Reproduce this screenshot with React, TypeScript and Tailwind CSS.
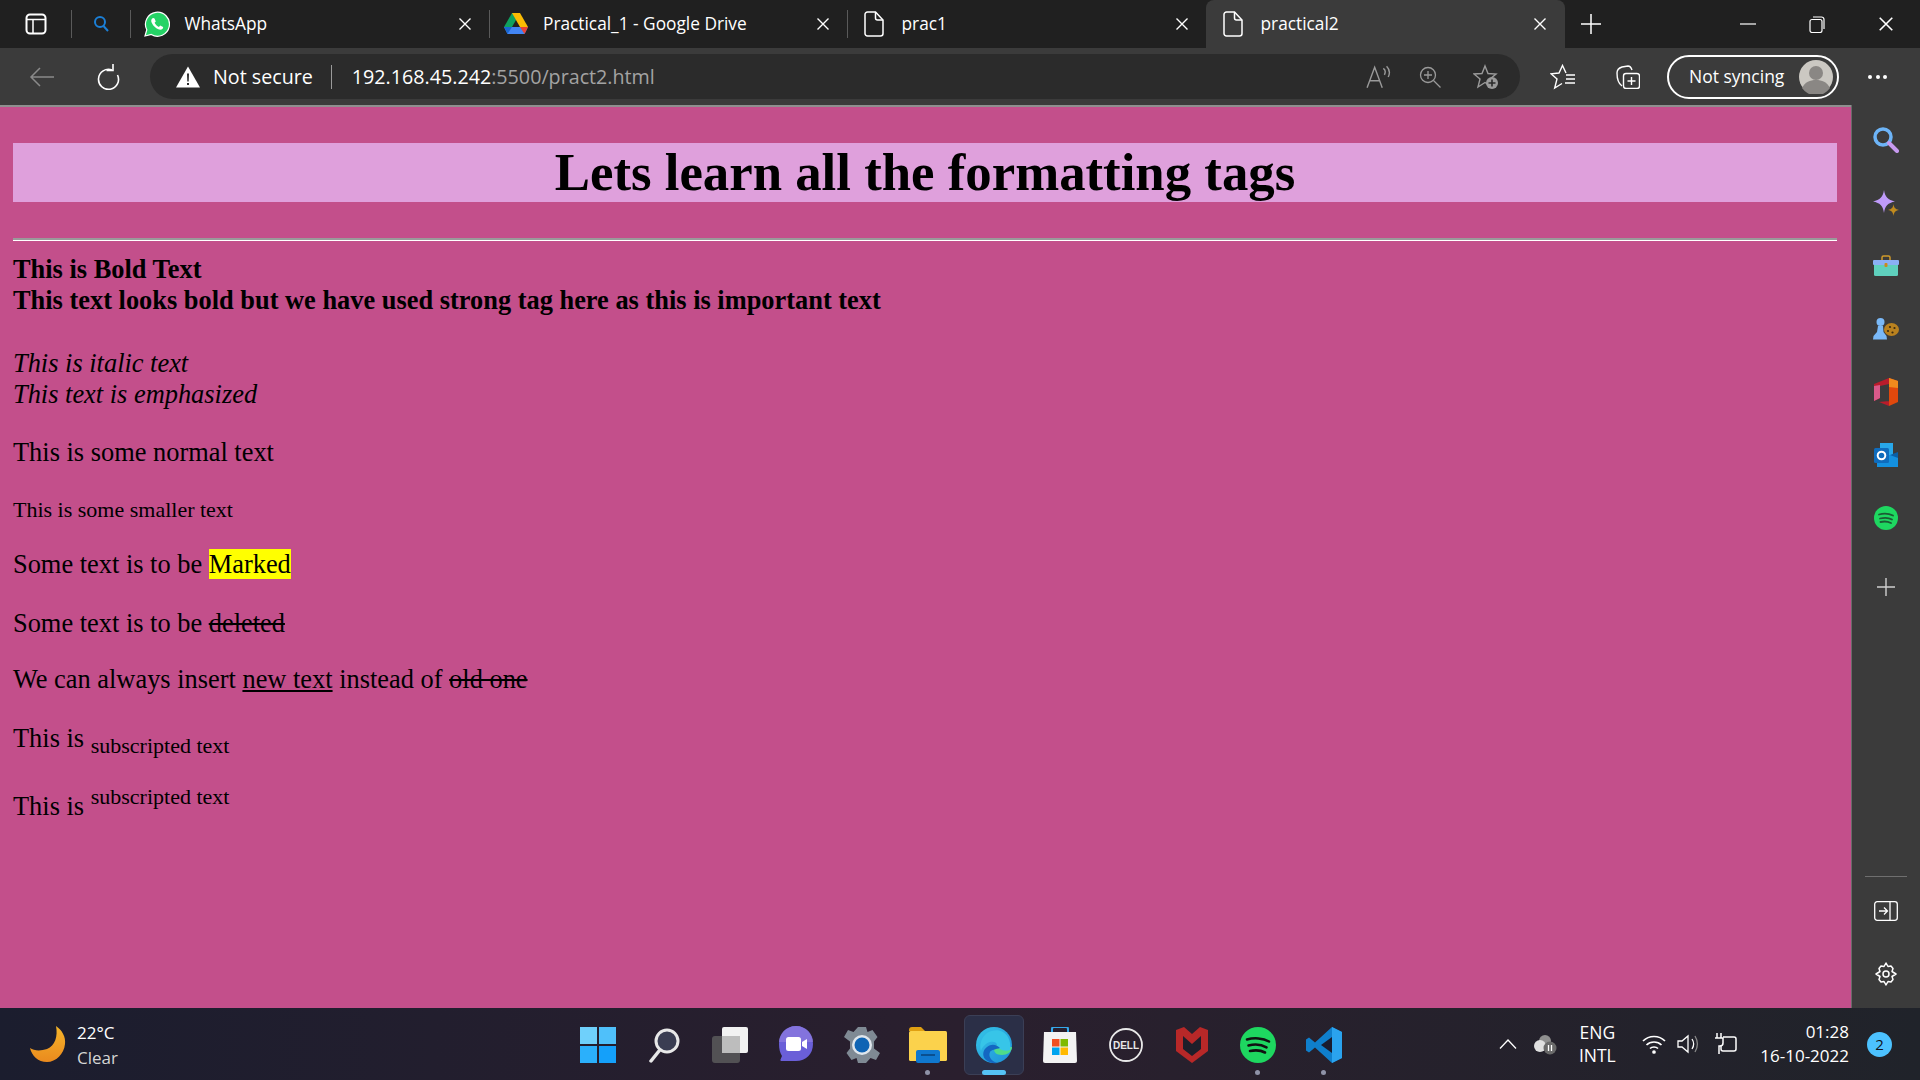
import React from "react";

const ui = { fontFamily: '"Open Sans", "Noto Sans", sans-serif' };
const serif = { fontFamily: '"Liberation Serif", "Times New Roman", serif' };

const CloseX = ({ size = 14 }: { size?: number }) => (
  <svg width={size} height={size} viewBox="0 0 14 14" fill="none" stroke="#fff" strokeWidth="1.4">
    <path d="M1.5 1.5l11 11M12.5 1.5l-11 11" />
  </svg>
);

const DocIcon = () => (
  <svg width="20" height="26" viewBox="0 0 20 26" fill="none" stroke="#fff" strokeWidth="1.5">
    <path d="M3.5 1h8L19 9v13.5a2.5 2.5 0 0 1-2.5 2.5h-13A2.5 2.5 0 0 1 1 22.500V3.500A2.500 2.500 0 0 1 3.500 1z" />
    <path d="M11.500 1v6a2 2 0 0 0 2 2H19" />
  </svg>
);

const WhatsAppIcon = () => (
  <svg width="26" height="26" viewBox="0 0 26 26">
    <path d="M1 25l1.800-6.300A12 12 0 1 1 7.300 23.500z" fill="#25d366" stroke="#fff" strokeWidth="1.200" />
    <path d="M9.300 7c-.5 0-1 .2-1.400.7C7 8.800 7 10.400 8 12.300c1.300 2.600 3.600 4.900 6.300 6 1.700.7 3.400.5 4.300-.6.400-.5.600-1.200.5-1.800l-2.900-1.500-1.300 1.500c-1.800-.7-3.500-2.300-4.300-4.200l1.200-1.300-1.300-2.900z" fill="#fff" />
  </svg>
);

const DriveIcon = () => (
  <svg width="24" height="22" viewBox="0 0 24 22">
    <path d="M8 0h8L8 14H0z" fill="#0fa15f" />
    <path d="M8 0h8l8 14h-8z" fill="#fbbc04" />
    <path d="M4 14h20l-3.500 7H3.500L0 14z" fill="#4285f4" />
    <path d="M0 14h8l-4.500 7z" fill="#1967d2" />
    <path d="M16 14h8l-3.500 7z" fill="#ea4335" />
  </svg>
);

const tabs = [
  { title: "WhatsApp", icon: <WhatsAppIcon /> },
  { title: "Practical_1 - Google Drive", icon: <DriveIcon /> },
  { title: "prac1", icon: <DocIcon /> },
];

const TabBar = () => (
  <div className="flex h-[48px] items-stretch bg-[#202020] text-[17.3px] text-white">
    <div className="flex w-[71px] items-center justify-center">
      <svg width="22" height="22" viewBox="0 0 22 22" fill="none" stroke="#fff" strokeWidth="2">
        <rect x="1.500" y="1.500" width="19" height="19" rx="3.500" />
        <path d="M1.500 6.500h19M8 6.500v14" strokeWidth="1.500" />
      </svg>
    </div>
    <div className="my-[10px] w-px bg-[#5a5a5a]" />
    <div className="flex w-[58px] items-center justify-center">
      <svg width="16" height="18" viewBox="0 0 16 18" fill="none" stroke="#1b7fd6" strokeWidth="2">
        <circle cx="7" cy="7" r="5" />
        <path d="M10.500 11l4.500 5" />
      </svg>
    </div>
    <div className="my-[10px] w-px bg-[#5a5a5a]" />
    {tabs.map((tab, i) => (
      <React.Fragment key={tab.title}>
        <div className="flex w-[357.500px] items-center pr-[17px]">
          <div className="flex w-[53.500px] justify-center pr-[1px]">{tab.icon}</div>
          <span>{tab.title}</span>
          <div className="ml-auto">
            <CloseX />
          </div>
        </div>
        {i < 2 && <div className="my-[10px] w-px bg-[#5a5a5a]" />}
      </React.Fragment>
    ))}
    <div className="flex w-[359px] items-center rounded-t-[8px] bg-[#3b3b3b] pr-[18px]">
      <div className="flex w-[55px] justify-center">
        <DocIcon />
      </div>
      <span>practical2</span>
      <div className="ml-auto">
        <CloseX />
      </div>
    </div>
    <div className="flex w-[52px] items-center justify-center">
      <svg width="22" height="22" viewBox="0 0 22 22" stroke="#fff" strokeWidth="1.500">
        <path d="M11 1v20M1 11h20" />
      </svg>
    </div>
    <div className="ml-auto flex items-center">
      <div className="flex w-[69px] justify-center">
        <svg width="16" height="2" viewBox="0 0 16 2" stroke="#fff" strokeWidth="1.200">
          <path d="M0 1h16" />
        </svg>
      </div>
      <div className="flex w-[69px] justify-center">
        <svg width="16" height="17" viewBox="0 0 16 17" fill="none" stroke="#fff" strokeWidth="1.200">
          <rect x="1" y="3.500" width="12" height="13" rx="2" />
          <path d="M4 1h8.500A2.500 2.500 0 0 1 15 3.500V13" />
        </svg>
      </div>
      <div className="flex w-[69px] justify-center">
        <CloseX size={16} />
      </div>
    </div>
  </div>
);

const ToolBar = () => (
  <div className="flex h-[57px] items-center bg-[#3b3b3b] text-white">
    <div className="flex w-[84px] justify-center">
      <svg width="26" height="22" viewBox="0 0 26 22" fill="none" stroke="#8a8a8a" strokeWidth="1.500">
        <path d="M25 11H2M11 2l-9 9 9 9" />
      </svg>
    </div>
    <div className="flex w-[48px] justify-center">
      <svg width="24" height="26" viewBox="0 0 24 26" fill="none" stroke="#fff" strokeWidth="1.600">
        <path d="M21.500 11A10 10 0 1 1 16 6" />
        <path d="M17 0v6.500h-6.500" />
      </svg>
    </div>
    <div className="ml-[18px] flex h-[45px] w-[1370px] items-center rounded-full bg-[#2b2b2b] pl-[26px]">
      <svg width="24" height="22" viewBox="0 0 24 22">
        <path d="M12 0.500L24 21.500H0z" fill="#fff" />
        <path d="M11 7.500h2l-.3 8h-1.400zM11 17h2v2h-2z" fill="#2b2b2b" />
      </svg>
      <span className="ml-[13px] text-[19.700px]" style={ui}>
        Not secure
      </span>
      <div className="ml-[18px] h-[24px] w-px bg-[#9a9a9a]" />
      <span className="ml-[20px] text-[19.700px]" style={ui}>
        192.168.45.242<span className="text-[#a3a3a3]">:5500/pract2.html</span>
      </span>
      <div className="ml-auto flex items-center pr-[21px]">
        <svg width="26" height="26" viewBox="0 0 24 24" fill="none" stroke="#9a9a9a" strokeWidth="1.300">
          <path d="M1 22L8 3l7 19M3.500 15.500h9M16 4c2 1.500 2 4 1 6M19 2c3 3 3 7 1.500 10" />
        </svg>
        <svg className="ml-[27px]" width="22" height="22" viewBox="0 0 22 22" fill="none" stroke="#9a9a9a" strokeWidth="1.300">
          <circle cx="9" cy="9" r="7.500" />
          <path d="M14.500 14.500l7 7M5 9h8M9 5v8" />
        </svg>
        <svg className="ml-[32px]" width="26" height="26" viewBox="0 0 26 26" fill="none" stroke="#9a9a9a" strokeWidth="1.400">
          <path d="M12 2l3 7.500 8 .5-6 5 2 8-7-4.500-7 4.500 2-8-6-5 8-.5z" />
          <circle cx="19" cy="19" r="6" fill="#9a9a9a" stroke="none" />
          <path d="M19 15.500v7M15.500 19h7" stroke="#2b2b2b" strokeWidth="1.600" />
        </svg>
      </div>
    </div>
    <div className="ml-[30px] flex w-[26px] justify-center">
      <svg width="26" height="26" viewBox="0 0 26 26" fill="none" stroke="#fff" strokeWidth="1.400">
        <path d="M16 9l-3.500-7.500L9 9l-8 .8 6 5.200-2.300 9L12 19.500" />
        <path d="M16 11h9M16 15h9M15 19h10" />
      </svg>
    </div>
    <div className="ml-[39px] flex w-[26px] justify-center">
      <svg width="24" height="24" viewBox="0 0 24 24" fill="none" stroke="#fff" strokeWidth="1.400">
        <path d="M6 21C3 19 1 14 1 8c0-3 2-5 5-6l6-1c2 0 3 1 4 4" />
        <rect x="7.500" y="8.500" width="16" height="15" rx="2.500" />
        <path d="M15.500 12v8M11.500 16h8" />
      </svg>
    </div>
    <div className="ml-[26px] flex h-[44px] w-[172px] items-center rounded-full border-2 border-white pl-[20px]">
      <span className="text-[17.500px]" style={ui}>
        Not syncing
      </span>
      <svg className="ml-auto mr-[4px]" width="34" height="34" viewBox="0 0 34 34">
        <circle cx="17" cy="17" r="17" fill="#cbc8c2" />
        <circle cx="17" cy="13" r="7" fill="#8a8784" />
        <path d="M3 28c3-6 8-8 14-8s11 2 14 8a17 17 0 0 1-28 0z" fill="#8a8784" />
      </svg>
    </div>
    <div className="ml-[29px] flex gap-[3.500px]">
      <div className="h-[4px] w-[4px] rounded-full bg-white" />
      <div className="h-[4px] w-[4px] rounded-full bg-white" />
      <div className="h-[4px] w-[4px] rounded-full bg-white" />
    </div>
  </div>
);

const Page = () => (
  <div
    className="min-w-0 flex-1 border-t-2 border-[#8f8f8f] bg-[#c34f8b] pl-[13px] pr-[14px] pt-[36px] text-[26.400px] leading-[31px] text-black"
    style={serif}
  >
    <h1 className="h-[59px] bg-[#dfa0dc] text-center text-[52.800px] font-bold leading-[59px]">
      Lets learn all the formatting tags
    </h1>
    <div className="mt-[36px] h-[3px] border-t-2 border-b border-t-[#9a9a9a] border-b-white" />
    <div className="mt-[13px]">
      <b className="block">This is Bold Text</b>
      <strong className="block">
        This text looks bold but we have used strong tag here as this is important text
      </strong>
    </div>
    <div className="mt-[32px]">
      <i className="block">This is italic text</i>
      <em className="block">This text is emphasized</em>
    </div>
    <p className="mt-[27px]">This is some normal text</p>
    <p className="mt-[26px] text-[22px]">
      <small className="text-[22px]">This is some smaller text</small>
    </p>
    <p className="mt-[24px]">
      Some text is to be <mark className="bg-[#ffff00]">Marked</mark>
    </p>
    <p className="mt-[28px]">
      Some text is to be <del>deleted</del>
    </p>
    <p className="mt-[25px]">
      We can always insert <ins className="underline">new text</ins> instead of <del>old one</del>
    </p>
    <p className="mt-[28px]">
      This is <sub className="text-[22px]">subscripted text</sub>
    </p>
    <p className="mt-[37px]">
      This is <sup className="text-[22px]">subscripted text</sup>
    </p>
  </div>
);

const SideBar = () => (
  <div className="flex w-[69px] shrink-0 flex-col items-center border-l border-[#6a6a6a] bg-[#3b3b3b] pt-[3px]">
    <div className="flex h-[63px] items-center">
      <svg width="26" height="26" viewBox="0 0 26 26" fill="none">
        <circle cx="10" cy="10" r="8" stroke="#6db4f7" strokeWidth="3.500" />
        <path d="M16 16l8 8" stroke="#c79af0" strokeWidth="4" strokeLinecap="round" />
      </svg>
    </div>
    <div className="flex h-[63px] items-center">
      <svg width="26" height="26" viewBox="0 0 26 26">
        <path d="M11 0c1 7 4 10 11 11.500-7 1.500-10 4-11 11.500C10 15.500 7 13 0 11.500 7 10 10 7 11 0z" fill="#bf9bfa" />
        <path d="M20.500 14c.5 3.500 1.500 5 5.500 6-4 .5-5 2.500-5.500 6-.5-3.500-1.500-5.500-5.500-6 4-1 5-2.500 5.500-6z" fill="#c08a1e" />
      </svg>
    </div>
    <div className="flex h-[63px] items-center">
      <svg width="26" height="22" viewBox="0 0 26 22">
        <path d="M9 5V2.500A1.500 1.500 0 0 1 10.500 1h5A1.500 1.500 0 0 1 17 2.500V5" fill="none" stroke="#d09a2a" strokeWidth="1.500" />
        <rect x="1" y="6" width="24" height="15" rx="1.500" fill="#5fd0bd" />
        <rect x="0" y="5" width="26" height="5" rx="1" fill="#8ab0f5" />
        <rect x="11.500" y="8" width="3" height="4" rx="1" fill="#c98a1e" />
      </svg>
    </div>
    <div className="flex h-[63px] items-center">
      <svg width="26" height="22" viewBox="0 0 26 22">
        <ellipse cx="18.500" cy="11.500" rx="7.500" ry="6.500" fill="#b9811f" />
        <circle cx="17" cy="9" r="1.100" fill="#3b2a10" />
        <circle cx="21.500" cy="10" r="1.100" fill="#3b2a10" />
        <circle cx="15" cy="13" r="1.100" fill="#3b2a10" />
        <circle cx="19.500" cy="14.500" r="1.100" fill="#3b2a10" />
        <circle cx="7.500" cy="4" r="4" fill="#7ab9f8" />
        <path d="M5 8h5l.5 6 3 4 .5 3.500H0l.5-3.500 3.500-4z" fill="#7ab9f8" />
      </svg>
    </div>
    <div className="flex h-[63px] items-center">
      <svg width="24" height="28" viewBox="0 0 24 28">
        <path d="M0 6l15-6v28L5 24l10-1V6L6 8v12l-6 3z" fill="#b91c2b" />
        <path d="M0 8l6-1v13l-6 3z" fill="#d85a8a" />
        <path d="M15 0l9 3v21l-9 4z" fill="#e0480c" />
        <path d="M15 0l9 3v7l-9-1z" fill="#f08a1d" />
      </svg>
    </div>
    <div className="flex h-[63px] items-center">
      <svg width="24" height="24" viewBox="0 0 24 24">
        <rect x="6" y="0" width="13" height="12" fill="#28a8ea" />
        <path d="M3 12h21v12H3z" fill="#1490df" />
        <path d="M16 12l8-3v6z" fill="#0a5fa6" />
        <rect x="0" y="5" width="15" height="15" rx="1.500" fill="#0f6cbd" />
        <circle cx="7.500" cy="12.500" r="3.800" fill="none" stroke="#fff" strokeWidth="2" />
      </svg>
    </div>
    <div className="flex h-[63px] items-center">
      <svg width="24" height="24" viewBox="0 0 24 24" fill="none">
        <circle cx="12" cy="12" r="12" fill="#1ed760" />
        <path d="M5 8.500c5-1.500 10-1 14 1M6 12.500c4-1 9-.8 12 1M6.500 16c3.500-.8 7.500-.5 10.500 1" stroke="#1c5a34" strokeWidth="1.800" strokeLinecap="round" />
      </svg>
    </div>
    <div className="mt-[6px] flex h-[63px] items-center">
      <svg width="18" height="18" viewBox="0 0 18 18" stroke="#cfcfcf" strokeWidth="1.400">
        <path d="M9 0v18M0 9h18" />
      </svg>
    </div>
    <div className="mt-auto h-px w-[42px] bg-[#6f6f6f]" />
    <div className="mt-[11px] flex h-[46px] items-center">
      <svg width="24" height="20" viewBox="0 0 24 20" fill="none" stroke="#fff" strokeWidth="1.300">
        <rect x="0.700" y="0.700" width="22.600" height="18.600" rx="2.500" />
        <path d="M16 1v18M5 10h8M10 6.500l3.500 3.500-3.500 3.500" />
      </svg>
    </div>
    <div className="mb-[11px] mt-[17px] flex h-[46px] items-center">
      <svg width="24" height="26" viewBox="0 0 24 24" fill="none" stroke="#fff" strokeWidth="1.500">
        <circle cx="12" cy="12" r="3" />
        <path d="M12 1l2 3.500 3-.5 2 2.500-1 3 4 2.500-4 2.500 1 3-2 2.500-3-.5-2 3.500-2-3.500-3 .5-2-2.500 1-3-4-2.500 4-2.500-1-3 2-2.500 3 .5z" strokeLinejoin="round" />
      </svg>
    </div>
  </div>
);

const taskIcons: { node: React.ReactNode; dot?: "small" | "active" }[] = [
  {
    node: (
      <svg width="36" height="36" viewBox="0 0 36 36">
        <rect x="0" y="0" width="17" height="17" fill="#6fd0fb" />
        <rect x="19" y="0" width="17" height="17" fill="#4fc0fa" />
        <rect x="0" y="19" width="17" height="17" fill="#2bb0fb" />
        <rect x="19" y="19" width="17" height="17" fill="#14a0fa" />
      </svg>
    ),
  },
  {
    node: (
      <svg width="32" height="36" viewBox="0 0 32 36" fill="none">
        <circle cx="19" cy="14" r="11" fill="#3a3d52" stroke="#e8e8e8" strokeWidth="3" />
        <path d="M11 24L3 34" stroke="#e8e8e8" strokeWidth="3.500" strokeLinecap="round" />
      </svg>
    ),
  },
  {
    node: (
      <svg width="36" height="36" viewBox="0 0 36 36">
        <rect x="10" y="0" width="26" height="26" rx="2" fill="#f2f2f2" />
        <rect x="0" y="9" width="28" height="27" rx="3" fill="#5b5b5b" fillOpacity="0.850" />
        <rect x="10" y="9" width="18" height="17" fill="#bdbdbd" />
      </svg>
    ),
  },
  {
    node: (
      <svg width="34" height="38" viewBox="0 0 34 38">
        <path d="M17 0c10 0 17 8 17 18s-7 17-17 17H3c-1 0-2-.5-1.500-1.500L3 30C1 27 0 23 0 18 0 8 7 0 17 0z" fill="#6a5fd8" />
        <path d="M17 0c10 0 17 8 17 16H0C0 8 7 0 17 0z" fill="#8f7ce0" fillOpacity="0.700" />
        <rect x="7" y="11" width="15" height="14" rx="2.500" fill="#fff" />
        <path d="M23 16l5-3v10l-5-3z" fill="#fff" />
      </svg>
    ),
  },
  {
    node: (
      <svg width="36" height="36" viewBox="0 0 36 36">
        <path d="M14 0h8l1.500 5 5-2 5 7-3.500 4.500V21.500L36 26l-4 7-5.500-2-4.500 5h-8l-1.500-5-5 2-5-7 3.500-4.500v-7L0 10l4-7 5.500 2z" fill="#7f8a94" />
        <circle cx="18" cy="18" r="10" fill="#dfe6ec" />
        <circle cx="18" cy="18" r="7.500" fill="#0f64b4" />
      </svg>
    ),
  },
  {
    node: (
      <svg width="38" height="36" viewBox="0 0 38 36">
        <path d="M0 3a3 3 0 0 1 3-3h9l4 4h-16z" fill="#e0a012" />
        <rect x="0" y="4" width="38" height="30" rx="1.500" fill="#fbd24c" />
        <rect x="7" y="23" width="24" height="13" rx="2" fill="#1078cf" />
        <rect x="12" y="27" width="14" height="2" fill="#0a4f8f" />
      </svg>
    ),
    dot: "small",
  },
  {
    node: (
      <svg width="36" height="38" viewBox="0 0 36 38">
        <defs>
          <linearGradient id="edgeA" x1="0" y1="0" x2="1" y2="1">
            <stop offset="0" stopColor="#36c6e8" />
            <stop offset="1" stopColor="#1d8fd8" />
          </linearGradient>
        </defs>
        <circle cx="18" cy="19" r="18" fill="url(#edgeA)" />
        <path d="M36 21c0 5-5 8-10 8-6 0-8-3-8-6s4-5 7-4 4 2 11 2z" fill="#4fdc8a" />
        <path d="M34 24c-3 1-7 1-10-1-2-1-3-2-3-4 0-3-4-4-7-3-4 1-8 5-9 9-2-6 0-13 6-18 8-5 17-3 21 4 2 4 3 8 2 13z" fill="#37c5e8" />
        <path d="M24 22c-3-3-8-5-13-1-4 3-5 8-2 12 3 3 8 5 12 4-6-2-9-7-7-11 1-2 6-3 10-4z" fill="#1467c2" />
      </svg>
    ),
    dot: "active",
  },
  {
    node: (
      <svg width="34" height="36" viewBox="0 0 34 36">
        <path d="M9 6V2a2 2 0 0 1 2-2h12a2 2 0 0 1 2 2v4" fill="none" stroke="#35a8ea" strokeWidth="2" />
        <path d="M1 5h32l1 29a2 2 0 0 1-2 2H2a2 2 0 0 1-2-2z" fill="#f3f3f3" />
        <rect x="9" y="12" width="7.500" height="7.500" fill="#f25022" />
        <rect x="17.500" y="12" width="7.500" height="7.500" fill="#7fba00" />
        <rect x="9" y="20.500" width="7.500" height="7.500" fill="#00a4ef" />
        <rect x="17.500" y="20.500" width="7.500" height="7.500" fill="#ffb900" />
      </svg>
    ),
  },
  {
    node: (
      <svg width="34" height="34" viewBox="0 0 34 34">
        <circle cx="17" cy="17" r="16" fill="none" stroke="#e8e8e8" strokeWidth="1.800" />
        <text x="17" y="20.500" textAnchor="middle" fontSize="10" fontWeight="700" fill="#e8e8e8" fontFamily="Liberation Sans, sans-serif">
          DELL
        </text>
      </svg>
    ),
  },
  {
    node: (
      <svg width="32" height="36" viewBox="0 0 32 36">
        <path d="M0 3l8-3 8 7 8-7 8 3v21L16 36 0 24z" fill="#b82828" />
        <path d="M7 9l9 8 9-8v13l-9 7-9-7z" fill="#1e1e2a" />
      </svg>
    ),
  },
  {
    node: (
      <svg width="36" height="36" viewBox="0 0 36 36" fill="none">
        <circle cx="18" cy="18" r="18" fill="#1ed760" />
        <path d="M7 12.500c7-2 16-1.500 22 2M8.500 18.500c6-1.500 13-1 18 1.800M10 24c5-1 11-.7 15 1.500" stroke="#111" strokeWidth="2.600" strokeLinecap="round" />
      </svg>
    ),
    dot: "small",
  },
  {
    node: (
      <svg width="36" height="36" viewBox="0 0 36 36">
        <path d="M26 0l10 5v26l-10 5-17-15.500-6 5L0 23.500V12.500L3 10.500l6 5z" fill="#0f7fcc" />
        <path d="M26 0l10 5v26l-10 5z" fill="#2aa3ee" />
        <path d="M26 10L15 18l11 8z" fill="#1a1c2e" />
      </svg>
    ),
    dot: "small",
  },
];

const TaskBar = () => (
  <div className="grid h-[72px] grid-cols-[1fr_auto_1fr] bg-gradient-to-r from-[#1b1d2e] via-[#2a1f2e] to-[#20232a] text-white" style={ui}>
    <div className="flex items-center pl-[30px]">
      <svg width="36" height="36" viewBox="0 0 36 36">
        <defs>
          <linearGradient id="moon" x1="0" y1="0" x2="0" y2="1">
            <stop offset="0" stopColor="#f5b52a" />
            <stop offset="1" stopColor="#ea8a1e" />
          </linearGradient>
        </defs>
        <path d="M26 0c6 4 10 11 9 18-1 10-9 18-18 18C8 36 2 30 0 22c4 3 11 3 17 1 8-3 11-13 9-23z" fill="url(#moon)" />
      </svg>
      <div className="ml-[11px] mt-[2px] text-[17px] leading-[25px]">
        <div>22°C</div>
        <div className="text-[#d5d5d5]">Clear</div>
      </div>
    </div>
    <div className="ml-[1px] flex h-full items-center pt-[1px]">
      {taskIcons.map((item, i) => (
        <div key={i} className="relative flex h-full w-[66px] items-center justify-center">
          {item.dot === "active" && (
            <div className="absolute left-[3px] top-[6px] h-[60px] w-[60px] rounded-[6px] border border-[#3b3f56] bg-[#2b2f47]" />
          )}
          <div className="relative">{item.node}</div>
          {item.dot === "small" && (
            <div className="absolute bottom-[5px] left-[30px] h-[5px] w-[5px] rounded-full bg-[#8f93a8]" />
          )}
          {item.dot === "active" && (
            <div className="absolute bottom-[5px] left-[21px] h-[5px] w-[24px] rounded-full bg-[#55c3f5]" />
          )}
        </div>
      ))}
    </div>
    <div className="flex items-center justify-end pr-[28px] text-[16px]">
      <svg width="18" height="10" viewBox="0 0 18 10" fill="none" stroke="#fff" strokeWidth="1.300">
        <path d="M1 9.500L9 1l8 8.500" />
      </svg>
      <svg className="ml-[16px]" width="24" height="24" viewBox="0 0 24 24">
        <circle cx="12" cy="9" r="6" fill="#8f8f8f" />
        <circle cx="7" cy="14" r="6" fill="#e0e0e0" />
        <circle cx="17" cy="16" r="6.500" fill="#6a6a6a" />
        <path d="M15.500 13v6M18.500 13v6" stroke="#fff" strokeWidth="1.300" />
      </svg>
      <div className="ml-[15px] w-[50px] text-center text-[17.500px] leading-[23px]">
        ENG
        <br />
        INTL
      </div>
      <svg className="ml-[20px]" width="24" height="20" viewBox="0 0 24 20" fill="none" stroke="#fff" strokeWidth="1.700">
        <path d="M1 7c6-6 16-6 22 0M4.500 11c4-4 11-4 15 0M8 14.500c2-2 6-2 8 0" />
        <circle cx="12" cy="18" r="1" fill="#fff" />
      </svg>
      <svg className="ml-[11px]" width="24" height="24" viewBox="0 0 24 24" fill="none" stroke="#fff" strokeWidth="1.300">
        <path d="M1 9h4l6-5v16l-6-5H1z" />
        <path d="M15 7c2 3 2 7 0 10" />
        <path d="M18 4c3 5 3 11 0 16" stroke="#8a8a8a" />
      </svg>
      <svg className="ml-[13px]" width="24" height="24" viewBox="0 0 24 24" fill="none" stroke="#fff" strokeWidth="1.500">
        <path d="M9 5h11a2 2 0 0 1 2 2v10a2 2 0 0 1-2 2H9a2 2 0 0 1-2-2v-3" />
        <path d="M3 1v5M7 1v5M1 6h8v5a3 3 0 0 1-3 3H5v8" />
      </svg>
      <div className="ml-[22px] text-right text-[17px] leading-[24px]">
        <div>01:28</div>
        <div>16-10-2022</div>
      </div>
      <div className="ml-[18px] flex h-[25px] w-[25px] items-center justify-center rounded-full bg-[#4cc2ff] text-[15px] text-[#10131c]">
        2
      </div>
    </div>
  </div>
);

export default function App() {
  return (
    <div className="flex h-[1080px] w-[1920px] flex-col overflow-hidden" style={ui}>
      <TabBar />
      <ToolBar />
      <div className="flex min-h-0 flex-1">
        <Page />
        <SideBar />
      </div>
      <TaskBar />
    </div>
  );
}
